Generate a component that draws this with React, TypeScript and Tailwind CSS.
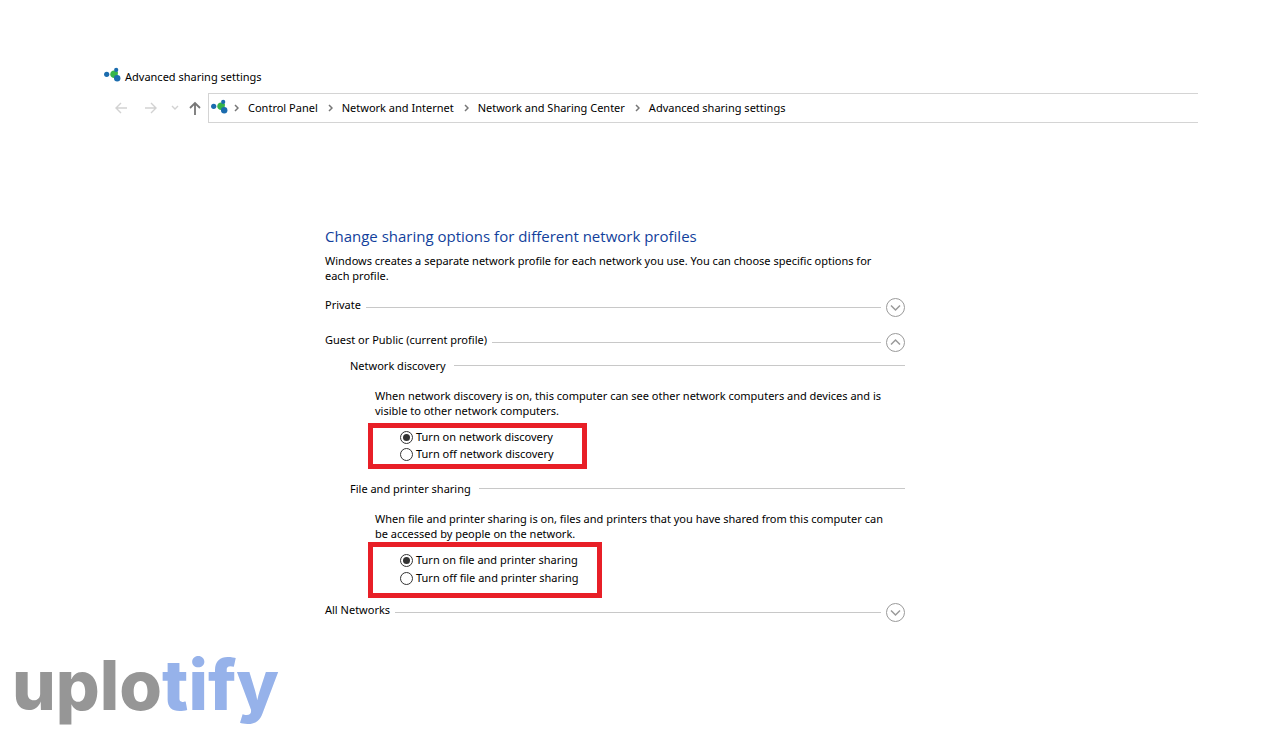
import { useState } from "react";
import type { ReactNode } from "react";

function NetworkIcon() {
  return (
    <svg width="17" height="15" viewBox="0 0 17 15" aria-hidden="true" className="mb-1 shrink-0">
      <path d="M10 7L12.500 2M10 7L13 11" stroke="#3b9c6a" strokeWidth="1.500" />
      <path d="M6.200 7.500C6.200 4.500 9 3 11 3.800L13.800 4.500C14.200 6 13.800 9 12.500 10.500C9.500 12 6.500 10.500 6.200 7.500Z" fill="#36b44a" />
      <circle cx="2.700" cy="7.300" r="2.600" fill="#1b6cae" />
      <circle cx="12.200" cy="2.900" r="2.100" fill="#1b6cae" />
      <circle cx="13.200" cy="11.300" r="3.200" fill="#1b6cae" />
    </svg>
  );
}

function ArrowIcon({ d, className }: { d: string; className: string }) {
  return (
    <svg width="12" height="14" viewBox="0 0 12 14" fill="none" stroke="currentColor" aria-hidden="true" className={className}>
      <path d={d} />
    </svg>
  );
}

function Crumb({ children }: { children: ReactNode }) {
  return (
    <li className="flex items-center">
      <svg width="5" height="8" viewBox="0 0 5 8" fill="none" stroke="#777777" strokeWidth="1.500" aria-hidden="true" className="mr-[9px]">
        <path d="M1 1L4 4L1 7" />
      </svg>
      <a href="#" className="whitespace-nowrap pb-0.5">{children}</a>
    </li>
  );
}

function ProfileHeader({ title, open, onToggle }: { title: string; open: boolean; onToggle: () => void }) {
  return (
    <div className="flex h-5 items-center gap-[5px]">
      <h2 className="pb-1.5">{title}</h2>
      <span className="h-px flex-1 bg-[#c8c8c8]" />
      <button type="button" aria-label={title} aria-expanded={open} onClick={onToggle} className="text-[#9a9a9a]">
        <svg width="19" height="19" viewBox="0 0 19 19" fill="none" stroke="currentColor" aria-hidden="true">
          <circle cx="9.500" cy="9.500" r="9" />
          <path d={open ? "M5 11.500L9.500 7L14 11.500" : "M5 7.500L9.500 12L14 7.500"} strokeWidth="1.500" />
        </svg>
      </button>
    </div>
  );
}

function SettingHeader({ children }: { children: ReactNode }) {
  return (
    <div className="ml-[25px] flex h-4 items-center gap-2">
      <h3>{children}</h3>
      <span className="h-px flex-1 bg-[#c8c8c8]" />
    </div>
  );
}

function Choice({ name, label, checked }: { name: string; label: string; checked?: boolean }) {
  return (
    <label className="flex items-center gap-[3px] whitespace-nowrap">
      <input
        type="radio"
        name={name}
        defaultChecked={checked}
        className="grid size-[13px] shrink-0 appearance-none place-items-center rounded-full border border-[#333333] bg-white before:size-[7px] before:rounded-full checked:before:bg-[#333333]"
      />
      <span className="pb-0.5">{label}</span>
    </label>
  );
}

export default function App() {
  const [priv, setPriv] = useState(false);
  const [guest, setGuest] = useState(true);
  const [all, setAll] = useState(false);

  return (
    <div className="min-h-screen bg-white pt-16 font-['Noto_Sans',sans-serif] text-[11px] leading-[15px] text-black">
      <header className="ml-[104px] mr-[82px]">
        <div className="flex h-6 items-center gap-1">
          <NetworkIcon />
          <h1>Advanced sharing settings</h1>
        </div>
        <nav className="mt-[5px] flex h-[30px] items-center">
          <button type="button" aria-label="Back" className="ml-[11px] text-[#d2d2d2]">
            <ArrowIcon d="M12 7H1M6 2L1 7L6 12" className="stroke-[1.4]" />
          </button>
          <button type="button" aria-label="Forward" className="ml-[18px] text-[#d2d2d2]">
            <ArrowIcon d="M0 7H11M6 2L11 7L6 12" className="stroke-[1.4]" />
          </button>
          <button type="button" aria-label="Recent locations" className="ml-3 text-[#d2d2d2]">
            <ArrowIcon d="M3 5L6 8L9 5" className="stroke-[1.4]" />
          </button>
          <button type="button" aria-label="Up" className="ml-2 mr-[7px] text-[#777777]">
            <ArrowIcon d="M6 14V2M1 7L6 2L11 7" className="stroke-[1.8]" />
          </button>
          <div className="flex h-full flex-1 items-center border-y border-l border-[#d4d4d4] pl-[2px]">
            <NetworkIcon />
            <ol className="ml-1.5 flex gap-2.5">
              <Crumb>Control Panel</Crumb>
              <Crumb>Network and Internet</Crumb>
              <Crumb>Network and Sharing Center</Crumb>
              <Crumb>Advanced sharing settings</Crumb>
            </ol>
          </div>
        </nav>
      </header>

      <main className="ml-[325px] mt-[101px] max-w-[580px]">
        <h2 className="font-['Open_Sans',sans-serif] text-[15px] leading-6 text-[#123f9c]">Change sharing options for different network profiles</h2>
        <p className="mt-[5px]">
          Windows creates a separate network profile for each network you use. You can choose specific options for
          <br />
          each profile.
        </p>

        <section className="mt-3.5">
          <ProfileHeader title="Private" open={priv} onToggle={() => setPriv(!priv)} />
        </section>

        <section className="mt-[15px]">
          <ProfileHeader title="Guest or Public (current profile)" open={guest} onToggle={() => setGuest(!guest)} />
          {guest && (
            <>
              <div className="mt-[5px]">
                <SettingHeader>Network discovery</SettingHeader>
                <p className="ml-[50px] mt-[15px]">
                  When network discovery is on, this computer can see other network computers and devices and is
                  <br />
                  visible to other network computers.
                </p>
                <div className="ml-[43px] mt-[5px] grid w-[219px] auto-rows-[17px] border-[5px] border-[#e81f27] py-px pl-[27px]">
                  <Choice name="discovery" label="Turn on network discovery" checked />
                  <Choice name="discovery" label="Turn off network discovery" />
                </div>
              </div>
              <div className="mt-[11px]">
                <SettingHeader>File and printer sharing</SettingHeader>
                <p className="ml-[50px] mt-[15px]">
                  When file and printer sharing is on, files and printers that you have shared from this computer can
                  <br />
                  be accessed by people on the network.
                </p>
                <div className="ml-[43px] mt-px grid w-[234px] auto-rows-[18px] border-[5px] border-[#e81f27] pb-1.5 pl-[27px] pt-1">
                  <Choice name="sharing" label="Turn on file and printer sharing" checked />
                  <Choice name="sharing" label="Turn off file and printer sharing" />
                </div>
              </div>
            </>
          )}
        </section>

        <section className="mt-1">
          <ProfileHeader title="All Networks" open={all} onToggle={() => setAll(!all)} />
        </section>
      </main>

      <footer className="ml-3 mt-[23px] font-['Inter',sans-serif] text-[69px] font-extrabold leading-[80px] text-[#969696]">
        uplo<span className="text-[#96b2ea]">tify</span>
      </footer>
    </div>
  );
}
